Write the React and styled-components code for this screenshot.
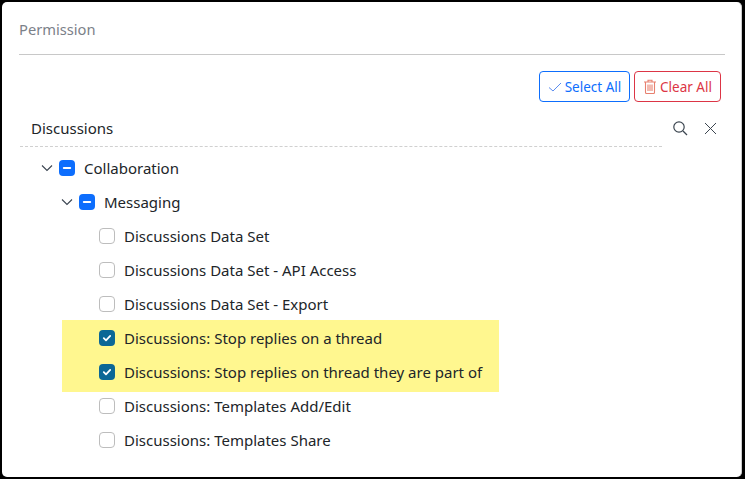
import React from "react";
import styled, { createGlobalStyle } from "styled-components";

const Global = createGlobalStyle`
  html, body {
    margin: 0;
    padding: 0;
    background: #000;
  }
  body {
    font-family: "Noto Sans", "Open Sans", sans-serif;
    color: #212529;
  }
`;

const Frame = styled.div`
  box-sizing: border-box;
  width: 745px;
  height: 479px;
  padding: 2px 3px 2px 2px;
  background: #000;
`;

const Panel = styled.div`
  box-sizing: border-box;
  height: 100%;
  padding: 0 17px;
  background: #fff;
  border-right: 1px solid #ccc;
  border-radius: 5px;
  overflow: hidden;
`;

const Header = styled.div`
  height: 53px;
  margin-right: -1px;
  box-sizing: border-box;
  padding-top: 17px;
  border-bottom: 1px solid #c8c8c8;
  font-size: 14.7px;
  line-height: 20px;
  color: #7b8189;
`;

const Actions = styled.div`
  display: flex;
  justify-content: flex-end;
  gap: 4px;
  margin-top: 16px;
  padding-right: 3px;
`;

const ActionButton = styled.button`
  display: flex;
  align-items: center;
  justify-content: center;
  gap: 3px;
  box-sizing: border-box;
  width: ${(p) => p.$width}px;
  height: 31px;
  padding: 0;
  background: #fff;
  border: 1px solid ${(p) => p.$color};
  border-radius: 4px;
  color: ${(p) => p.$color};
  font-family: inherit;
  font-size: 13.5px;
`;

const SearchBar = styled.div`
  display: flex;
  align-items: center;
  margin-top: 7px;
  height: 38px;
`;

const SearchLabel = styled.div`
  box-sizing: border-box;
  width: 642px;
  height: 38px;
  margin-left: 1px;
  padding: 9px 0 0 11px;
  border-bottom: 1px dashed #d0d0d0;
  font-size: 15px;
  line-height: 20px;
`;

const SearchIcons = styled.div`
  display: flex;
  align-items: center;
  gap: 15px;
  margin-left: 10px;
  color: #3c4650;
`;

const Tree = styled.div`
  margin-top: 4px;
`;

const Row = styled.div`
  display: flex;
  align-items: center;
  height: 34px;
  padding-left: ${(p) => p.$indent}px;
  font-size: 15px;
  white-space: nowrap;
`;

const Chevron = styled.svg`
  width: 12px;
  height: 12px;
  margin-right: 6px;
  color: #3a4450;
`;

const Box = styled.span`
  display: flex;
  align-items: center;
  justify-content: center;
  flex: none;
  box-sizing: border-box;
  width: 16px;
  height: 16px;
  margin-right: 9px;
  border-radius: 4px;
  border: 1px solid ${(p) => (p.$state === "empty" ? "#bdbdbd" : "transparent")};
  background: ${(p) =>
    p.$state === "mixed" ? "#0d6efd" : p.$state === "checked" ? "#0b6796" : "#fff"};
`;

const Highlight = styled.div`
  width: 437px;
  margin: -1px 0 -3px 43px;
  padding: 1px 0 3px;
  background: #fff78f;
`;

function Check() {
  return (
    <svg width="10" height="10" viewBox="0 0 10 10" fill="none">
      <path d="M1.8 5.2 4 7.3 8.2 2.9" stroke="#fff" strokeWidth="1.8" strokeLinecap="round" strokeLinejoin="round" />
    </svg>
  );
}

function Dash() {
  return (
    <svg width="10" height="10" viewBox="0 0 10 10" fill="none">
      <path d="M1.8 5h6.4" stroke="#fff" strokeWidth="2" strokeLinecap="round" />
    </svg>
  );
}

function Item({ indent, state = "empty", open, label }) {
  return (
    <Row $indent={indent}>
      {open && (
        <Chevron viewBox="0 0 12 12" fill="none">
          <path d="M1 3.5 6 8.5 11 3.5" stroke="currentColor" strokeWidth="1.1" />
        </Chevron>
      )}
      <Box $state={state}>
        {state === "mixed" && <Dash />}
        {state === "checked" && <Check />}
      </Box>
      {label}
    </Row>
  );
}

export default function App() {
  return (
    <Frame>
      <Global />
      <Panel>
        <Header>Permission</Header>
        <Actions>
          <ActionButton $color="#0d6efd" $width={91}>
            <svg width="14" height="14" viewBox="0 0 14 14" fill="none">
              <path d="M1 7.5 5 11 13 3" stroke="#5b8df0" strokeWidth="1" />
            </svg>
            Select All
          </ActionButton>
          <ActionButton $color="#dc3545" $width={87}>
            <svg width="14" height="15" viewBox="0 0 14 15" fill="none" stroke="#e8806f" strokeWidth="1.1">
              <path d="M1 3h12M5 3V1.2h4V3M2.5 3v10.5a1 1 0 0 0 1 1h7a1 1 0 0 0 1-1V3M5 5.5v6.5M7 5.5v6.5M9 5.5v6.5" />
            </svg>
            Clear All
          </ActionButton>
        </Actions>
        <SearchBar>
          <SearchLabel>Discussions</SearchLabel>
          <SearchIcons>
            <svg width="16" height="16" viewBox="0 0 16 16" fill="none" stroke="currentColor" strokeWidth="1.2">
              <circle cx="7" cy="7" r="5.2" />
              <path d="M11 11 15 15" />
            </svg>
            <svg width="15" height="15" viewBox="0 0 15 15" fill="none" stroke="currentColor" strokeWidth="1">
              <path d="M2 2 13 13M13 2 2 13" />
            </svg>
          </SearchIcons>
        </SearchBar>
        <Tree>
          <Item indent={22} state="mixed" open label="Collaboration" />
          <Item indent={42} state="mixed" open label="Messaging" />
          <Item indent={80} label="Discussions Data Set" />
          <Item indent={80} label="Discussions Data Set - API Access" />
          <Item indent={80} label="Discussions Data Set - Export" />
          <Highlight>
            <Item indent={37} state="checked" label="Discussions: Stop replies on a thread" />
            <Item indent={37} state="checked" label="Discussions: Stop replies on thread they are part of" />
          </Highlight>
          <Item indent={80} label="Discussions: Templates Add/Edit" />
          <Item indent={80} label="Discussions: Templates Share" />
        </Tree>
      </Panel>
    </Frame>
  );
}
